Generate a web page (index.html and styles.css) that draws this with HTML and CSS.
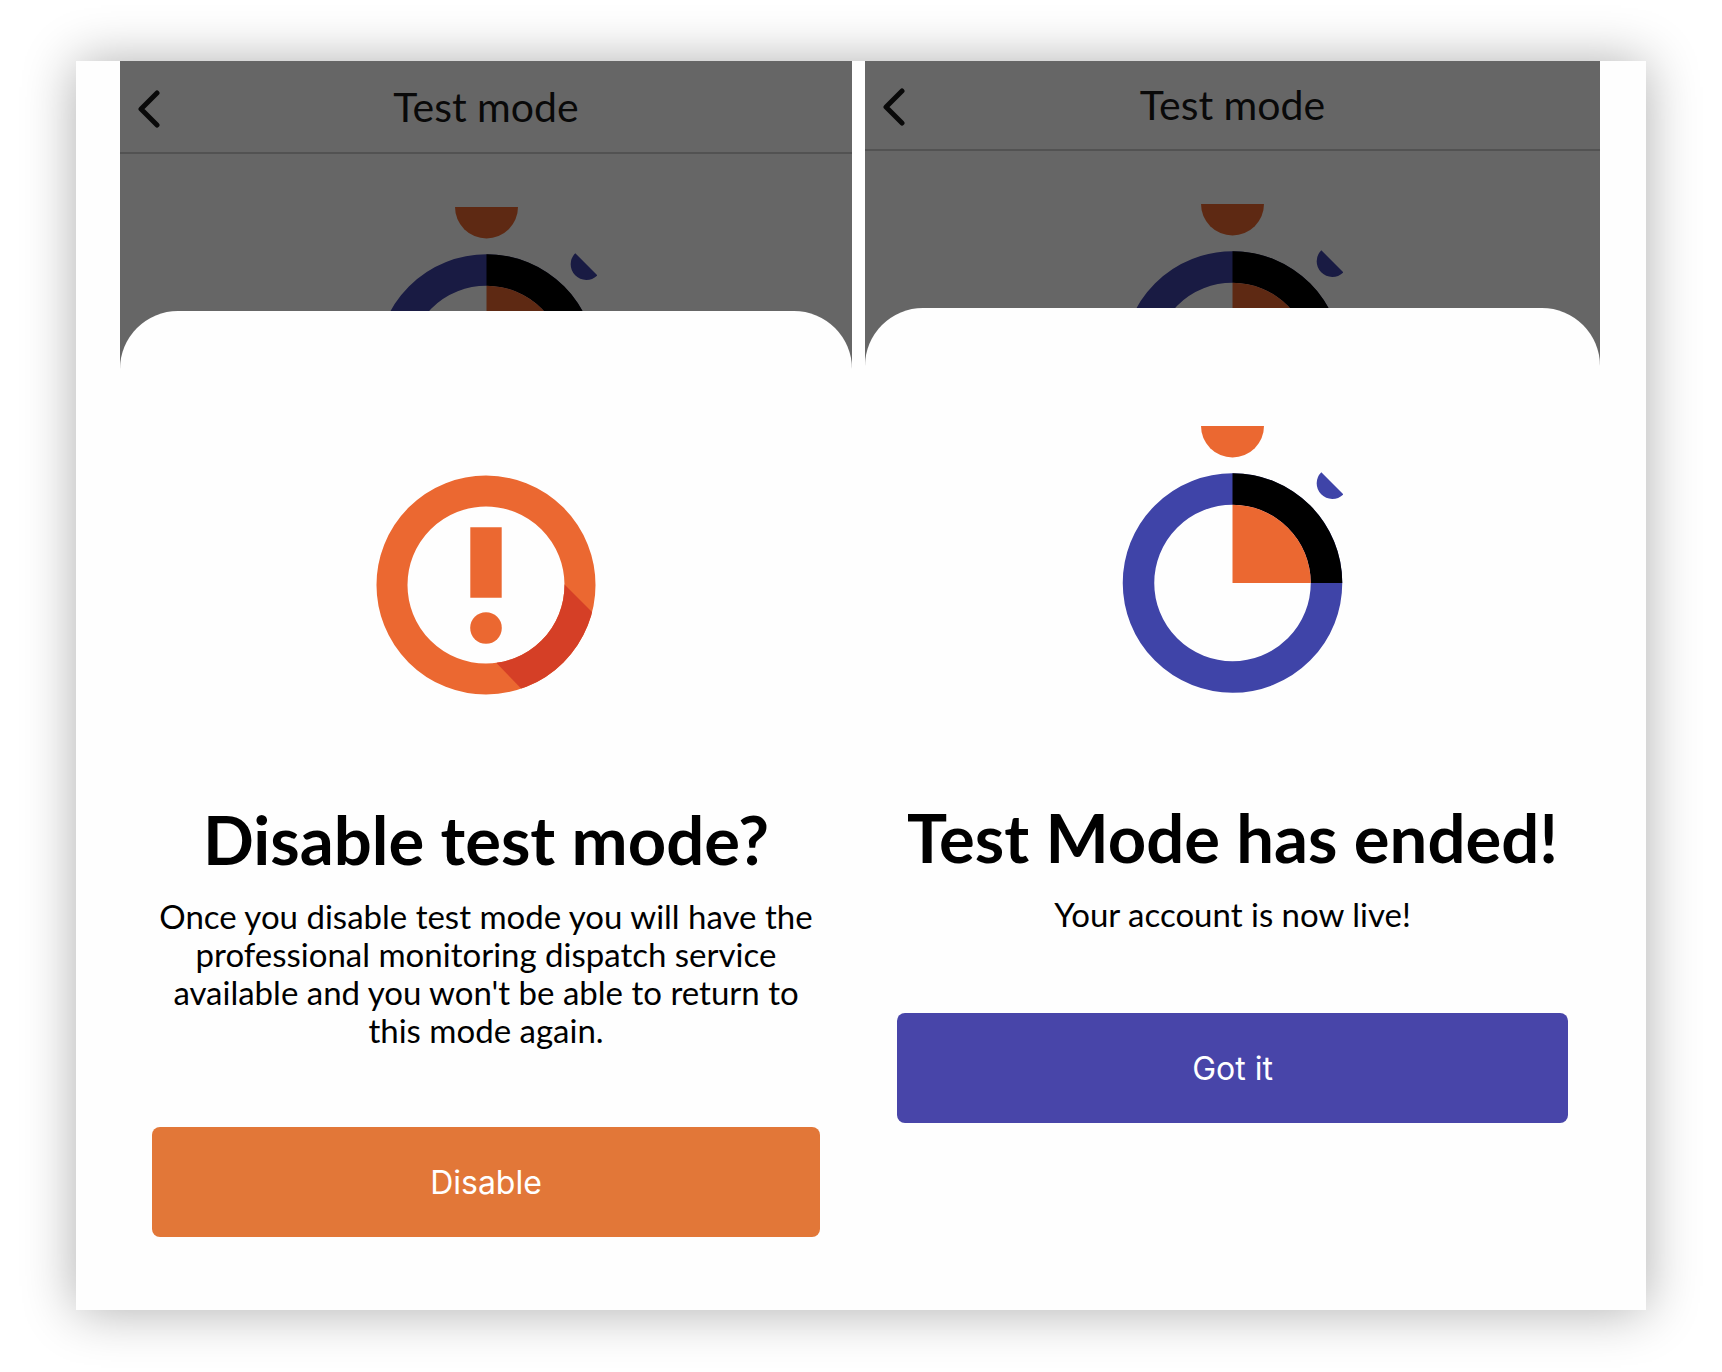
FILE: index.html
```html
<!DOCTYPE html>
<html lang="en">
<head>
<meta charset="utf-8">
<meta name="viewport" content="width=device-width, initial-scale=1">
<title>Test mode</title>
<link rel="stylesheet" href="styles.css">
</head>
<body>
<svg class="sprite" aria-hidden="true">
  <symbol id="back" viewBox="0 0 22 38">
    <path d="M19 3 3 19l16 16" fill="none" stroke="currentColor" stroke-width="5" stroke-linecap="round" stroke-linejoin="round"/>
  </symbol>
  <symbol id="stopwatch" viewBox="0 0 221 267">
    <path d="M79 0h63a31.500 31.500 0 0 1-63 0z" fill="#eb6831"/>
    <circle cx="110.500" cy="157" r="94" fill="none" stroke="#3f44a8" stroke-width="31.500"/>
    <path d="M110.500 47.200A109.800 109.800 0 0 1 220.300 157h-31.500a78.300 78.300 0 0 0-78.300-78.300z" fill="#000"/>
    <path d="M110.500 78.700A78.300 78.300 0 0 1 188.800 157h-78.300z" fill="#eb6831"/>
    <path d="M199.300 46.200l22 22.200a15.600 15.600 0 0 1-22-22.200z" fill="#3f44a8"/>
  </symbol>
</svg>
<main class="card">
  <section class="phone phone-confirm">
    <div class="screen">
      <header class="bar">
        <button class="back" type="button" aria-label="Back"><svg class="back-icon"><use href="#back"/></svg></button>
        <h1 class="title">Test mode</h1>
      </header>
      <svg class="stopwatch"><use href="#stopwatch"/></svg>
    </div>
    <div class="sheet" role="dialog" aria-labelledby="confirm-title">
      <svg class="warning" viewBox="0 0 220 220" aria-hidden="true">
        <defs><clipPath id="wedge"><path d="M188 109l70 70-40 110-97.500-101z"/></clipPath></defs>
        <circle cx="110" cy="110" r="94" fill="none" stroke="#eb6831" stroke-width="31"/>
        <circle cx="110" cy="110" r="94" fill="none" stroke="#d53f26" stroke-width="31" clip-path="url(#wedge)"/>
        <path d="M94.300 52.300h31.400v70.500H94.300z" fill="#eb6831"/>
        <circle cx="110" cy="153" r="15.800" fill="#eb6831"/>
      </svg>
      <h2 class="heading" id="confirm-title">Disable test mode?</h2>
      <p class="text">Once you disable test mode you will have the professional monitoring dispatch service available and you won't be able to return to this mode again.</p>
      <button class="action action-disable" type="button">Disable</button>
    </div>
  </section>
  <section class="phone phone-done">
    <div class="screen">
      <header class="bar">
        <button class="back" type="button" aria-label="Back"><svg class="back-icon"><use href="#back"/></svg></button>
        <h1 class="title">Test mode</h1>
      </header>
      <svg class="stopwatch"><use href="#stopwatch"/></svg>
    </div>
    <div class="sheet" role="dialog" aria-labelledby="done-title">
      <svg class="stopwatch" aria-hidden="true"><use href="#stopwatch"/></svg>
      <h2 class="heading" id="done-title">Test Mode has ended!</h2>
      <p class="text">Your account is now live!</p>
      <button class="action action-done" type="button">Got it</button>
    </div>
  </section>
</main>
</body>
</html>
```
FILE: styles.css
```css
* { box-sizing: border-box; }

body {
  margin: 0;
  background: #fff;
  color: #000;
  font-family: Lato, "Open Sans", sans-serif;
}

.sprite { position: absolute; width: 0; height: 0; }

.card {
  display: grid;
  grid-template-columns: 732fr 735fr;
  gap: 13px;
  margin: 61px 76px;
  padding: 0 46px 0 44px;
  background: #fefefe;
  box-shadow: 0 1px 50px rgba(0, 0, 0, 0.32);
}

.phone { display: grid; }

/* The app screen and the sheet share one grid cell, the sheet on top. */
.screen,
.sheet { grid-area: 1 / 1; min-width: 0; }

.screen {
  position: relative;
  display: flex;
  flex-direction: column;
  align-items: center;
  background: #fff;
}

.screen::after {
  content: "";
  position: absolute;
  inset: 0;
  background: rgba(0, 0, 0, 0.6);
}

.bar {
  display: grid;
  grid-template-columns: 56px 1fr 56px;
  align-items: center;
  width: 100%;
  height: 93px;
  margin-bottom: 53px;
  padding-top: 4px;
  border-bottom: 2px solid #cdcdcd;
  color: #181818;
}

.phone-done .bar { height: 90px; }

.back {
  display: flex;
  padding: 0 0 0 18px;
  border: 0;
  background: none;
  color: inherit;
}

.back-icon { width: 22px; height: 38px; }

.title {
  margin: 0;
  padding-bottom: 4px;
  font-size: 41px;
  font-weight: 400;
  line-height: 48px;
  text-align: center;
}

.stopwatch { flex: none; width: 221px; height: 267px; }
.warning { flex: none; width: 220px; height: 220px; }

.sheet {
  z-index: 1;
  display: flex;
  flex-direction: column;
  align-items: center;
  margin-top: 250px;
  padding: 164px 32px 73px;
  border-radius: 58px 58px 0 0;
  background: #fefefe;
}

.phone-done .sheet { margin-top: 247px; padding-top: 118px; }

.heading {
  margin: 106px 0 20px;
  font-size: 67px;
  font-weight: 700;
  line-height: 76px;
  text-align: center;
}

.text {
  margin: 0 0 78px;
  font-size: 33px;
  line-height: 38px;
  text-align: center;
}

.phone-done .text { margin-bottom: 80px; }

.action {
  width: 100%;
  height: 110px;
  border: 0;
  border-radius: 8px;
  color: #fff;
  font-family: Inter, sans-serif;
  font-size: 32px;
}

.action-disable { background: #e27738; }
.action-done { background: #4845a9; }
```
